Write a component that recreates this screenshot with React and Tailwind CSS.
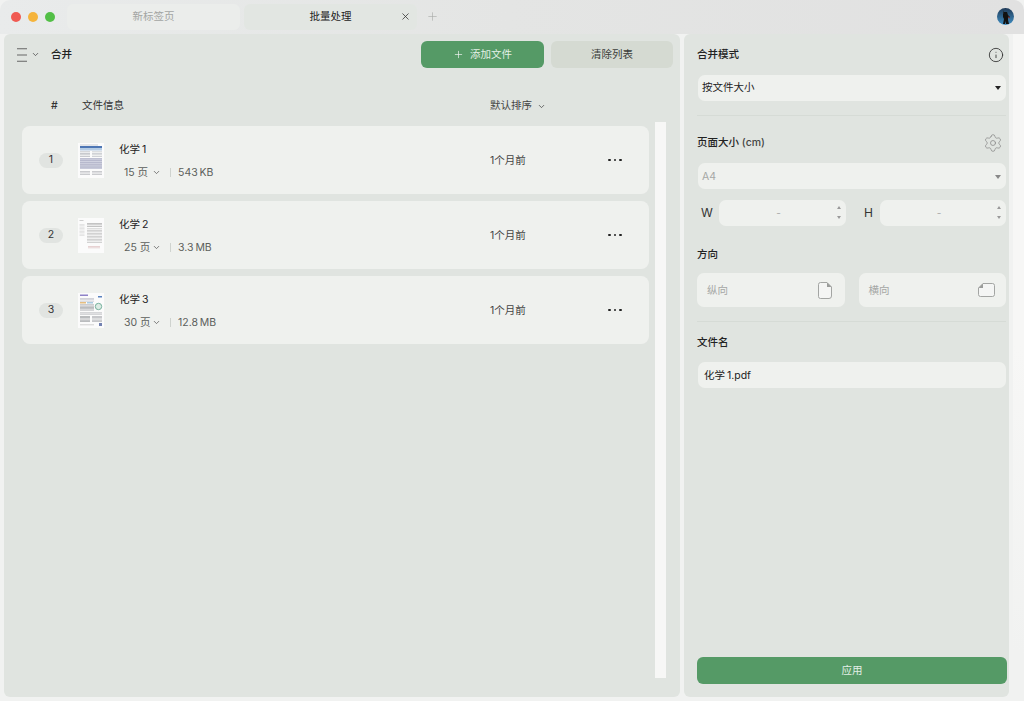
import React from "react";
import { ChevronDown, Plus, X, Info, Settings } from "lucide-react";

function Thumb({ kind }) {
  const lines = (x, y, w, n, gap, c, h = 0.7) =>
    Array.from({ length: n }).map((_, i) => (
      <rect key={`${x}-${y}-${i}`} x={x} y={y + i * gap} width={w} height={h} fill={c} />
    ));
  return (
    <svg width="26" height="35" viewBox="0 0 26 35" className="shrink-0 block">
      <rect width="26" height="35" fill="#fbfbfb" />
      {kind === 1 && (
        <g opacity="0.85">
          <rect x="2" y="1.5" width="18" height="1" fill="#c8ccd4" />
          <rect x="2" y="3" width="22" height="2" fill="#2f5fa8" />
          <rect x="2" y="5" width="22" height="2.5" fill="#a9c4e0" />
          {lines(2, 8.5, 10, 4, 1.5, "#a6a9b0")}
          {lines(14, 8.5, 10, 4, 1.5, "#b4b7bd")}
          <rect x="2" y="15" width="22" height="11" fill="#c9cbdc" />
          {lines(2, 15.5, 22, 6, 1.8, "#9fa2bb")}
          {lines(2, 28, 10, 3, 1.6, "#a9abb1")}
          {lines(14, 28, 10, 3, 1.6, "#a9abb1")}
        </g>
      )}
      {kind === 2 && (
        <g opacity="0.7">
          {lines(1.5, 2, 4, 1, 1, "#a0a0a0")}
          {lines(1.5, 6, 5, 9, 1.4, "#cfcfcf")}
          {lines(9, 5, 15, 3, 1.5, "#8d8d8d")}
          {lines(9, 10.5, 15, 10, 1.5, "#a9a9a9")}
          {lines(10, 28, 12, 2, 1.5, "#d3a9ab")}
        </g>
      )}
      {kind === 3 && (
        <g opacity="0.85">
          <rect x="2" y="1.5" width="8" height="1.5" fill="#7d6fc0" />
          <rect x="20" y="3" width="4" height="1.5" fill="#3f6fb5" />
          {lines(2, 5, 14, 3, 1.4, "#b6b9c4")}
          <rect x="2" y="9" width="6" height="1.5" fill="#e2b36b" />
          <rect x="9" y="9" width="6" height="1.5" fill="#9cc3dc" />
          <circle cx="20.5" cy="13.5" r="3.2" fill="#d7e9e0" stroke="#5fa58d" strokeWidth="1" />
          {lines(2, 11.5, 14, 5, 1.3, "#8f9296")}
          {lines(2, 19.5, 22, 2, 1.3, "#a4a6aa")}
          {lines(2, 23, 10, 5, 1.3, "#8f9296")}
          {lines(14, 23, 10, 5, 1.3, "#a3a5a9")}
          {lines(2, 31.5, 14, 1, 1, "#b5b5b5")}
          <rect x="21" y="30" width="3" height="3" fill="#5c6ea5" />
        </g>
      )}
    </svg>
  );
}

function Row({ n, title, pages, size }) {
  return (
    <div className="h-[68px] rounded-[8px] bg-[#eff1ee] flex items-center pl-[17px] pr-[26px]">
      <div className="w-[24px] h-[15px] rounded-full bg-[#e1e4e1] flex items-center justify-center text-[10.5px] text-[#333]">{n}</div>
      <div className="ml-[15px]"><Thumb kind={n} /></div>
      <div className="ml-[15px] w-[371px] flex flex-col">
        <div className="text-[10.5px] leading-[14px] text-[#222] mt-[2px]">{title}</div>
        <div className="flex items-center mt-[9px] ml-[5px] text-[10.5px] leading-[14px] text-[#5c5f5c]">
          <span className="w-[26px] whitespace-nowrap">{pages} 页</span>
          <ChevronDown size={9} strokeWidth={2} className="ml-[2px] text-[#555]" />
          <span className="ml-[9px] w-px h-[9px] bg-[#cfd3cf]" />
          <span className="ml-[7px] whitespace-nowrap">{size}</span>
        </div>
      </div>
      <div className="text-[10.5px] text-[#444] whitespace-nowrap w-[118px] pt-[2px]">1个月前</div>
      <div className="flex gap-[3px]">
        <span className="w-[2.5px] h-[2.5px] rounded-full bg-[#222]" />
        <span className="w-[2.5px] h-[2.5px] rounded-full bg-[#222]" />
        <span className="w-[2.5px] h-[2.5px] rounded-full bg-[#222]" />
      </div>
    </div>
  );
}

function Caret({ color = "border-t-[#222]" }) {
  return <span className={`w-0 h-0 border-l-[3px] border-r-[3px] border-t-[4px] border-l-transparent border-r-transparent ${color}`} />;
}

function NumberInput({ width }) {
  return (
    <div className={`${width} h-[26px] rounded-[7px] bg-[#eff1ee] flex items-center relative`}>
      <span className="flex-1 text-center text-[10px] text-[#aaa] pr-[8px]">-</span>
      <div className="absolute right-[5px] top-[6px] flex flex-col gap-[7px]">
        <span className="w-0 h-0 border-l-[2.5px] border-r-[2.5px] border-b-[3px] border-l-transparent border-r-transparent border-b-[#999]" />
        <span className="w-0 h-0 border-l-[2.5px] border-r-[2.5px] border-t-[3px] border-l-transparent border-r-transparent border-t-[#999]" />
      </div>
    </div>
  );
}

export default function App() {
  return (
    <div className="w-[1024px] h-[701px] overflow-hidden bg-[#f1f2f1] flex flex-col font-['Inter','Noto_Sans_CJK_SC',sans-serif]">
      {/* title bar */}
      <div className="h-[34px] shrink-0 flex items-start bg-gradient-to-r from-[#e9ebeb] via-[#e4e5e4] to-[#e1e1e1] rounded-t-[10px] relative">
        <div className="flex gap-[7px] ml-[11px] mt-[12px] w-[45px] shrink-0">
          <span className="w-[10px] h-[10px] rounded-full bg-[#f05a52] shrink-0" />
          <span className="w-[10px] h-[10px] rounded-full bg-[#f5b43c] shrink-0" />
          <span className="w-[10px] h-[10px] rounded-full bg-[#52bf46] shrink-0" />
        </div>
        <div className="ml-[11px] mt-[4px] w-[173px] h-[26px] rounded-[6px] bg-[#ebedeb] flex items-center justify-center text-[10.5px] text-[#a3a5a3]">新标签页</div>
        <div className="ml-[4px] mt-[4px] w-[173px] h-[26px] rounded-[6px] bg-[#e2e6e2] flex items-center relative">
          <span className="flex-1 text-center text-[10.5px] text-[#222]">批量处理</span>
          <X size={11} strokeWidth={1.7} className="absolute right-[6px] top-[7px] text-[#333]" />
        </div>
        <Plus size={13} strokeWidth={1.1} className="ml-[9px] mt-[10px] text-[#a5a7a5]" />
        <div className="ml-auto mr-[10px] mt-[8px] w-[17px] h-[17px] rounded-full overflow-hidden">
          <svg width="17" height="17" viewBox="0 0 17 17" className="block">
            <defs>
              <linearGradient id="av" x1="0" y1="0" x2="0" y2="1">
                <stop offset="0" stopColor="#203a58" />
                <stop offset="1" stopColor="#3f8fc4" />
              </linearGradient>
            </defs>
            <rect width="17" height="17" fill="url(#av)" />
            <path d="M7 4h3l1 3 2 2-1 1-1-1v3l1 4H9l-.5-3L8 16H6l1-5-1-2 0-3z" fill="#111" />
            <path d="M11 8l2 2-1 .6z" fill="#b3302a" />
            <path d="M6 2l1 3-1 .3z" fill="#222" />
          </svg>
        </div>
      </div>

      {/* body */}
      <div className="flex-1 flex min-h-0 pl-[4px] pb-[4px] gap-[4px]">
        {/* left panel */}
        <div className="w-[676px] shrink-0 rounded-[6px] bg-[#e0e4e0] flex flex-col">
          <div className="flex items-center h-[27px] mt-[7px] pl-[13px] pr-[7px] shrink-0">
            <svg width="10" height="14" viewBox="0 0 10 14" className="block">
              <path d="M0 .75h10M0 7h10M0 13.25h10" stroke="#666" strokeWidth="1.2" />
            </svg>
            <ChevronDown size={9} strokeWidth={2} className="ml-[4px] text-[#444]" />
            <span className="ml-[11px] text-[10.5px] font-medium text-[#222]">合并</span>
            <button className="ml-auto w-[123px] h-[27px] rounded-[6px] bg-[#559a66] flex items-center justify-center text-[10.5px] text-[#e3efe5]">
              <Plus size={11} strokeWidth={1.5} className="mr-[6px] text-[#f0f5f0]" />
              添加文件
            </button>
            <button className="ml-[7px] w-[122px] h-[27px] rounded-[6px] bg-[#d5dad2] text-[10.5px] text-[#3a3d3a]">清除列表</button>
          </div>
          <div className="flex items-center h-[14px] mt-[31px] text-[10.5px] text-[#333] shrink-0">
            <span className="ml-[47px] w-[31px] font-medium">#</span>
            <span className="w-[408px]">文件信息</span>
            <span className="text-[#444]">默认排序</span>
            <ChevronDown size={9} strokeWidth={2} className="ml-[5px] text-[#444]" />
          </div>
          <div className="flex flex-1 min-h-0 mt-[9px] pb-[19px]">
            <div className="w-[627px] ml-[18px] mt-[4px] flex flex-col gap-[7px]">
              <Row n={1} title={"化学\u20091"} pages="15" size={"543\u2009KB"} />
              <Row n={2} title={"化学\u20092"} pages="25" size={"3.3\u2009MB"} />
              <Row n={3} title={"化学\u20093"} pages="30" size={"12.8\u2009MB"} />
            </div>
            <div className="ml-[6px] w-[11px] bg-[#f7f7f6]" />
          </div>
        </div>

        {/* right panel */}
        <div className="w-[325px] shrink-0 rounded-[6px] bg-[#e0e4e0] flex flex-col pl-[13px] pr-[3px] pb-[13px]">
          <div className="flex items-center justify-between h-[14px] mt-[14px] pr-[3px]">
            <span className="text-[10.5px] font-medium text-[#222]">合并模式</span>
            <Info size={16} strokeWidth={1.3} className="text-[#333] -mr-[1px]" />
          </div>
          <div className="mt-[13px] ml-[1px] h-[26px] rounded-[7px] bg-[#eff1ee] flex items-center justify-between pl-[4px] pr-[5px] text-[10.5px] text-[#222]">
            按文件大小
            <Caret />
          </div>
          <div className="mt-[14px] h-px bg-[#d6dbd6]" />
          <div className="flex items-center justify-between h-[18px] mt-[18px] pr-[4px]">
            <span className="text-[10.5px] font-medium text-[#222]">页面大小 <span className="text-[#444]">(cm)</span></span>
            <Settings size={20} strokeWidth={0.9} className="text-[#888] -mr-[1px]" />
          </div>
          <div className="mt-[11px] ml-[1px] h-[26px] rounded-[7px] bg-[#eff1ee] flex items-center justify-between pl-[4px] pr-[5px] pt-[2px] text-[10.5px] text-[#a5a7a5]">
            A4
            <Caret color="border-t-[#888]" />
          </div>
          <div className="flex items-center mt-[11px] ml-[1px]">
            <span className="w-[21px] pl-[3px] text-[12px] text-[#333]">W</span>
            <NumberInput width="w-[127px]" />
            <span className="ml-[18px] w-[16px] text-[12px] text-[#333]">H</span>
            <NumberInput width="w-[126px]" />
          </div>
          <div className="mt-[22px] h-[14px] flex items-center text-[10.5px] font-medium text-[#222]">方向</div>
          <div className="flex gap-[14px] mt-[11px]">
            <div className="w-[148px] h-[34px] rounded-[7px] bg-[#eff1ee] flex items-center justify-between pl-[10px] pr-[13px] text-[10.5px] text-[#a5a7a5]">
              <span className="pt-[2px]">纵向</span>
              <svg width="14" height="17" viewBox="0 0 14 17" className="block">
                <path d="M2.500.5h6.500l4.500 4.500v9a2.500 2.500 0 0 1-2.500 2.500h-8.500a2 2 0 0 1-2-2v-12a2 2 0 0 1 2-2z" fill="#f4f5f4" stroke="#9a9c9a" strokeWidth="0.9" />
                <path d="M9 .5l4.500 4.500H9z" fill="#9a9c9a" />
              </svg>
            </div>
            <div className="w-[148px] h-[34px] rounded-[7px] bg-[#eff1ee] flex items-center justify-between pl-[10px] pr-[11px] text-[10.5px] text-[#a5a7a5]">
              <span className="pt-[2px]">横向</span>
              <svg width="17" height="14" viewBox="0 0 17 14" className="block">
                <path d="M5 .5h9.500a2 2 0 0 1 2 2v9a2 2 0 0 1-2 2h-12a2 2 0 0 1-2-2v-6.500z" fill="#f4f5f4" stroke="#9a9c9a" strokeWidth="0.9" />
                <path d="M5 .5l-4.500 4.500H5z" fill="#9a9c9a" />
              </svg>
            </div>
          </div>
          <div className="mt-[14px] h-px bg-[#d6dbd6]" />
          <div className="mt-[14px] h-[14px] flex items-center text-[10.5px] font-medium text-[#222]">文件名</div>
          <div className="mt-[12px] ml-[1px] h-[26px] rounded-[7px] bg-[#eff1ee] flex items-center px-[6px] pt-[2px] text-[10.5px] text-[#222]">{"化学\u20091.pdf"}</div>
          <button className="mt-auto w-[310px] h-[27px] rounded-[6px] bg-[#559a66] text-[10.5px] text-[#e3efe5]">应用</button>
        </div>

        {/* right scroll track */}
        <div className="w-[11px] h-[622px] bg-gradient-to-b from-[#f7f7f6] via-[#f7f7f6] to-[#f1f2f1] shrink-0" />
      </div>
    </div>
  );
}
